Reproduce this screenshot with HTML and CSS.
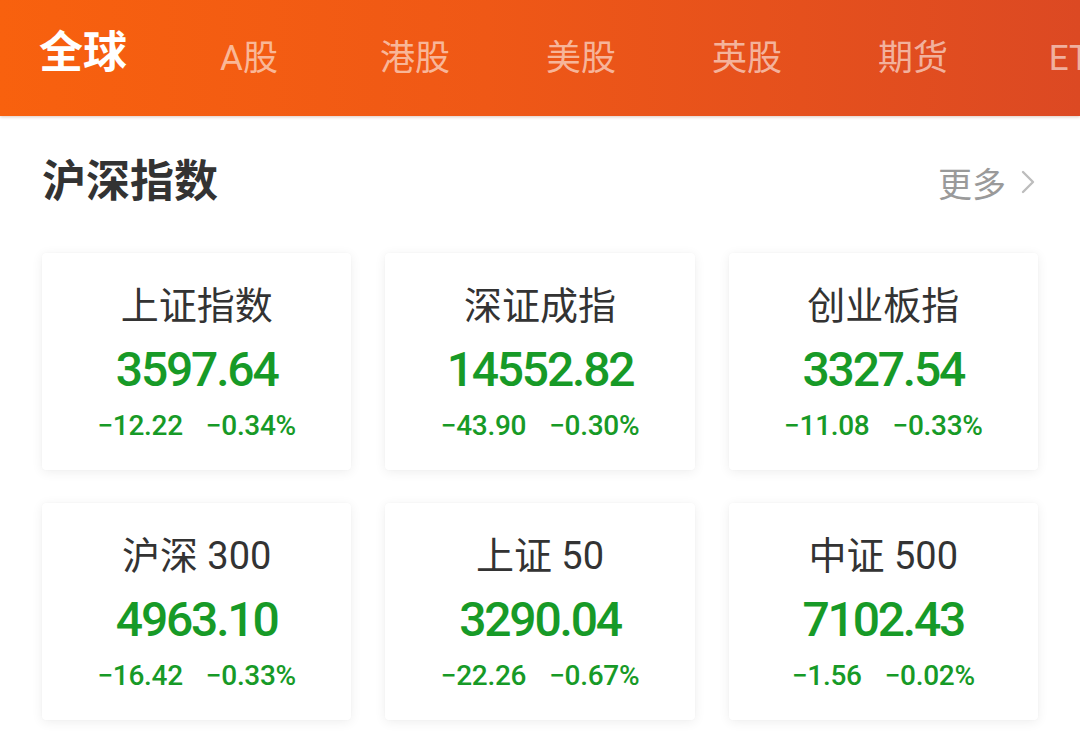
FILE: index.html
```html
<!DOCTYPE html>
<html lang="zh-CN">
<head>
<meta charset="utf-8">
<title>沪深指数</title>
<link rel="stylesheet" href="styles.css">
</head>
<body>
<header class="tabs">
  <div class="tab active">全球</div>
  <div class="tab">A股</div>
  <div class="tab">港股</div>
  <div class="tab">美股</div>
  <div class="tab">英股</div>
  <div class="tab">期货</div>
  <div class="tab">ETF</div>
</header>
<main class="section">
  <div class="section-head">
    <h2 class="title">沪深指数</h2>
    <div class="more">更多<svg class="chev" viewBox="0 0 16 26" width="16" height="26"><polyline points="3,3 13,13 3,23" fill="none" stroke="#bdbdbd" stroke-width="2.4" stroke-linecap="round" stroke-linejoin="round"/></svg></div>
  </div>
  <div class="grid">
    <div class="card"><div class="name">上证指数</div><div class="value">3597.64</div><div class="change"><span>−12.22</span><span>−0.34%</span></div></div>
    <div class="card"><div class="name">深证成指</div><div class="value">14552.82</div><div class="change"><span>−43.90</span><span>−0.30%</span></div></div>
    <div class="card"><div class="name">创业板指</div><div class="value">3327.54</div><div class="change"><span>−11.08</span><span>−0.33%</span></div></div>
    <div class="card"><div class="name">沪深 300</div><div class="value">4963.10</div><div class="change"><span>−16.42</span><span>−0.33%</span></div></div>
    <div class="card"><div class="name">上证 50</div><div class="value">3290.04</div><div class="change"><span>−22.26</span><span>−0.67%</span></div></div>
    <div class="card"><div class="name">中证 500</div><div class="value">7102.43</div><div class="change"><span>−1.56</span><span>−0.02%</span></div></div>
  </div>
</main>
</body>
</html>
```
FILE: styles.css
```css
* { box-sizing: border-box; }
html, body { margin: 0; padding: 0; }
body {
  width: 1080px;
  height: 753px;
  overflow: hidden;
  background: #fff;
  font-family: "Roboto", "Noto Sans CJK SC", sans-serif;
  color: #333;
}
.tabs {
  display: flex;
  align-items: center;
  height: 116px;
  background: linear-gradient(90deg, #f8610e 0%, #ef5816 45%, #dc4923 100%);
  box-shadow: 0 1px 3px rgba(120, 40, 0, 0.25);
  overflow: hidden;
  white-space: nowrap;
}
.tab {
  flex: 0 0 166px;
  text-align: center;
  font-size: 35px;
  line-height: 50px;
  color: rgba(255, 255, 255, 0.58);
  padding-top: 2px;
}
.tab.active {
  font-size: 44px;
  font-weight: 700;
  color: #fff;
  padding-top: 0;
  padding-bottom: 10px;
}
.section {
  padding: 36px 42px 0 42px;
}
.section-head {
  display: flex;
  align-items: center;
  justify-content: space-between;
  height: 60px;
}
.title {
  margin: 0;
  font-size: 44px;
  font-weight: 700;
  line-height: 60px;
  color: #333;
}
.more {
  display: flex;
  align-items: center;
  gap: 14px;
  font-size: 34px;
  color: #9a9a9a;
  margin-right: 2px;
}
.chev { display: block; }
.grid {
  margin-top: 41px;
  display: grid;
  grid-template-columns: repeat(3, 1fr);
  column-gap: 34px;
  row-gap: 33px;
}
.card {
  height: 217px;
  background: #fff;
  border-radius: 4px;
  box-shadow: 0 2px 12px rgba(0, 0, 0, 0.07), 0 0 2px rgba(0, 0, 0, 0.03);
  display: flex;
  flex-direction: column;
  align-items: center;
  padding-top: 28px;
}
.name {
  font-size: 38px;
  line-height: 50px;
  color: #333;
}
.value {
  margin-top: 7px;
  font-size: 48px;
  line-height: 64px;
  font-weight: 500;
  letter-spacing: -2.2px;
  color: #179a27;
}
.change {
  margin-top: 4px;
  display: flex;
  gap: 23px;
  font-size: 28px;
  line-height: 40px;
  font-weight: 500;
  color: #179a27;
  letter-spacing: -0.3px;
}
```
